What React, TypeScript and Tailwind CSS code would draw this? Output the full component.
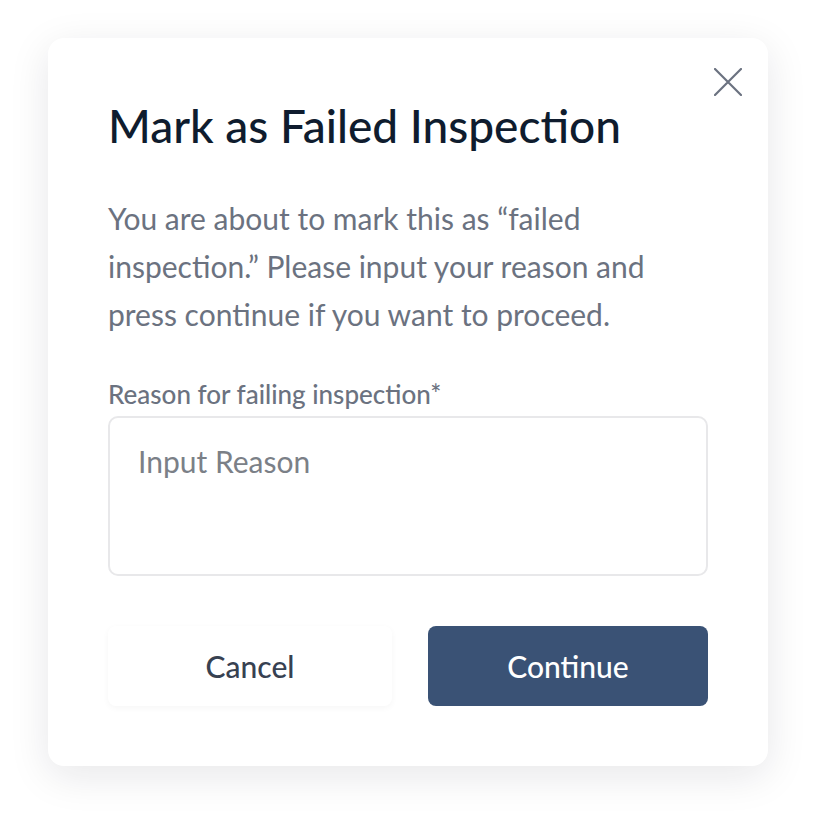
import React from "react";

export default function App() {
  return (
    <div className="w-[816px] h-[824px] bg-white pt-[38px] pl-[48px]" style={{ fontFamily: "Lato, 'Noto Sans', sans-serif" }}>
      <div className="relative w-[720px] h-[728px] rounded-[16px] bg-white shadow-[0_10px_40px_rgba(17,24,39,0.10)] px-[60px] pt-[62px]">
        <button className="absolute right-[26px] top-[30px] w-[28px] h-[28px] flex items-center justify-center text-[#6b7280]">
          <svg width="28" height="28" viewBox="0 0 28 28" fill="none" stroke="currentColor" strokeWidth="2.2" strokeLinecap="round">
            <path d="M1 1 L27 27 M27 1 L1 27" />
          </svg>
        </button>
        <h1 className="text-[46px] leading-[52px] text-[#0f1c2e] font-medium">Mark as Failed Inspection</h1>
        <p className="mt-[42px] text-[30px] leading-[48px] text-[#6b7280] w-[580px]">
          You are about to mark this as “failed inspection.” Please input your reason and press continue if you want to proceed.
        </p>
        <div className="mt-[40px] text-[26px] leading-[32px] text-[#6b7280] font-medium">Reason for failing inspection*</div>
        <div className="mt-[6px] w-[600px] h-[160px] rounded-[10px] border-2 border-[#e8e8ea] px-[28px] pt-[25px] text-[30px] leading-[36px] text-[#7b8087]">
          Input Reason
        </div>
        <div className="mt-[50px] flex gap-[36px]">
          <button className="w-[284px] h-[80px] rounded-[8px] bg-white shadow-[0_2px_6px_rgba(0,0,0,0.04)] text-[30px] font-medium text-[#374151]">Cancel</button>
          <button className="w-[280px] h-[80px] rounded-[8px] bg-[#3a5275] text-[30px] font-medium text-white">Continue</button>
        </div>
      </div>
    </div>
  );
}
